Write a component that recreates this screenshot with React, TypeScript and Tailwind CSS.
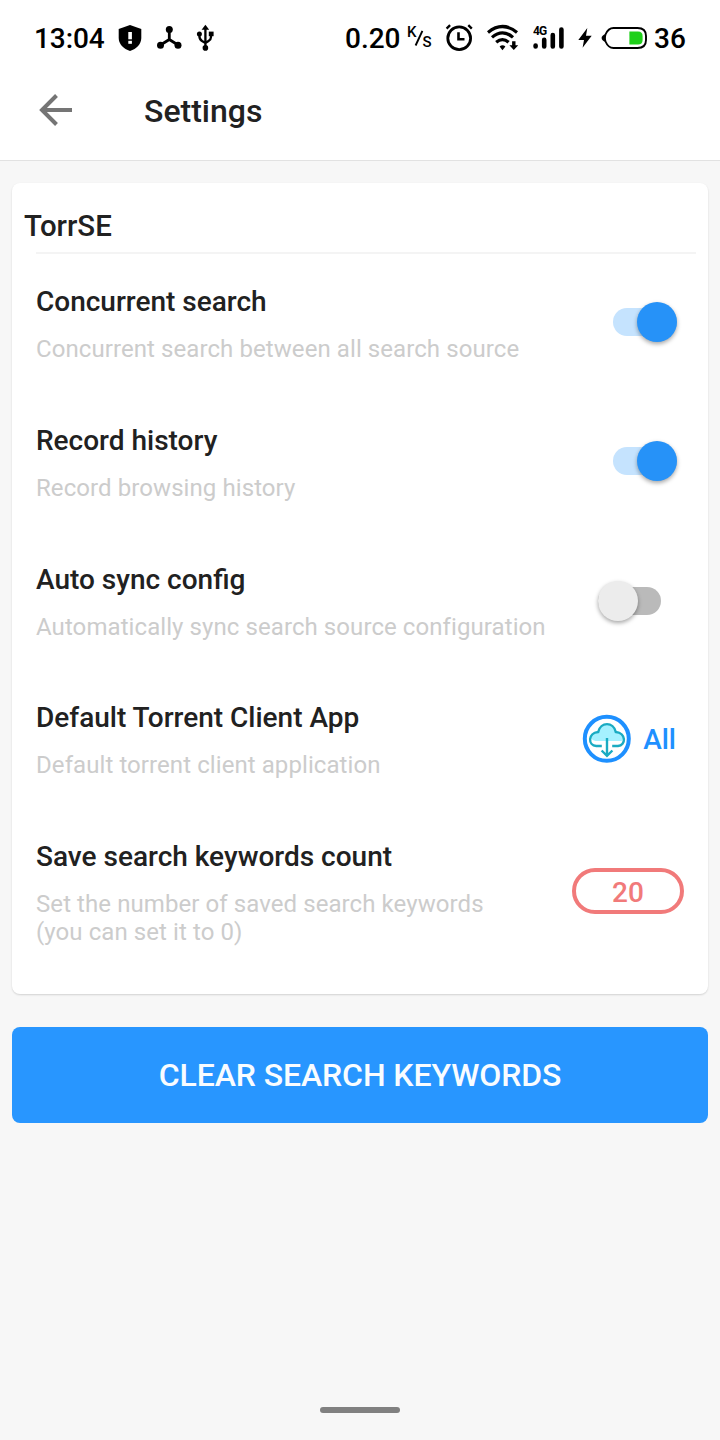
import type { ReactNode } from "react";

function StatusBar() {
  return (
    <div className="flex h-[76px] items-center bg-white pl-[34px] text-[28px] font-medium leading-none text-black">
      <span className="w-[84px] pt-[2px] tracking-[-0.1px]">13:04</span>
      <svg className="h-[28px] w-[24px]" viewBox="0 0 24 28">
        <path d="M12 1 L23.3 5 V14 C23.3 20 18.5 25 12 27 C5.5 25 .7 20 .7 14 V5 Z" fill="#000" />
        <rect x="10.3" y="8" width="3.6" height="7.3" fill="#fff" />
        <rect x="10.3" y="16.8" width="3.6" height="3" fill="#fff" />
      </svg>
      <svg className="ml-[14px] h-[26px] w-[26px]" viewBox="0 0 26 26">
        <path d="M13.3 5 V14.5 M13.3 14.5 L4.5 20 M13.3 14.5 L22 20" stroke="#000" strokeWidth="2.8" fill="none" />
        <circle cx="13.3" cy="4.6" r="3.5" />
        <circle cx="4.5" cy="20.2" r="3.5" />
        <circle cx="22" cy="20.2" r="3.5" />
      </svg>
      <svg className="ml-[14px] h-[28px] w-[18px]" viewBox="0 0 18 28">
        <path d="M9.4 5 V24 M3.4 9 V12 Q3.4 15.5 6 17 L9.4 19 M15 9 V13 Q15 15.5 12.5 17 L9.4 19" stroke="#000" strokeWidth="2.3" fill="none" />
        <path d="M9.4 0.8 L13.2 5.7 H5.6 Z" />
        <circle cx="3.4" cy="9.9" r="2.5" />
        <rect x="12.8" y="7.6" width="4.8" height="4.6" />
        <circle cx="9.4" cy="23.9" r="2.8" />
      </svg>
      <span className="ml-[131px] w-[62px] pt-[2px]">0.20</span>
      <span className="flex h-[26px] w-[26px] text-[15px]">
        <span>K</span>
        <svg className="-ml-[2px] mt-[5px] h-[17px] w-[10px]" viewBox="0 0 10 17">
          <path d="M8.4 .8 L1.6 15.5" stroke="#000" strokeWidth="1.9" />
        </svg>
        <span className="-ml-[2px] pt-[10px]">S</span>
      </span>
      <svg className="ml-[12px] h-[28px] w-[28px]" viewBox="0 0 28 28">
        <circle cx="14.2" cy="14.2" r="11.4" fill="none" stroke="#000" strokeWidth="2.8" />
        <path d="M13.5 8.3 V15.3 H19.5" fill="none" stroke="#000" strokeWidth="2.6" />
        <path d="M1.6 4.6 L5.1 1.2 M23.3 1.2 L26.8 4.6" stroke="#000" strokeWidth="2.4" />
      </svg>
      <svg className="ml-[14px] h-[28px] w-[32px]" viewBox="0 0 32 28">
        <g fill="none" stroke="#000" strokeWidth="3.2">
          <path d="M1 8.4 Q15.5 -3.4 30 8.4" />
          <path d="M5 13.4 Q15.5 4.4 26 13.4" />
          <path d="M9.2 18.3 Q15.5 12.8 21.6 18.3" />
        </g>
        <path d="M12.6 22.4 Q15.5 19.9 18.4 22.4 L15.5 26.2 Z" />
        <path d="M25.1 17.2 H28.5 V21.2 H31.2 L26.8 26 L22.4 21.2 H25.1 Z" />
      </svg>
      <svg className="ml-[14px] h-[26px] w-[33px]" viewBox="0 0 33 26">
        <g stroke="#000" strokeWidth="4.6" strokeLinecap="round">
          <path d="M2.6 20.6 V21.4 M11.2 14.8 V21.4 M19.8 10 V21.4 M28.4 4.6 V21.4" />
        </g>
        <text x="0" y="10.4" fontSize="12" fontWeight="700" letterSpacing="-1" className="font-['Roboto']">4G</text>
      </svg>
      <svg className="ml-[12px] h-[22px] w-[14px]" viewBox="0 0 14 22">
        <path d="M9.3 1 L.3 13 H6 L4.6 20.8 L13.7 8.8 H8 Z" />
      </svg>
      <svg className="ml-[9px] h-[24px] w-[48px]" viewBox="0 0 48 24">
        <path d="M12.5 2 H36.5 Q45 2 45 10 V14 Q45 22 36.5 22 H12.5 C8.5 22 6 19 4.5 15.5 Q3 12 4.5 8.5 C6 5 8.5 2 12.5 2 Z" fill="none" stroke="#000" strokeWidth="1.9" />
        <path d="M4.7 8 Q.6 9.5 .6 12 Q.6 14.5 4.7 16 Z" />
        <path d="M28.4 5.5 H37 Q41.6 5.5 41.6 10 V14 Q41.6 18.5 37 18.5 H28.4 Z" fill="#1fd01a" />
      </svg>
      <span className="ml-[5px] pt-[2px]">36</span>
    </div>
  );
}

function Header() {
  return (
    <header className="flex h-[85px] items-center border-b border-[#e2e2e2] bg-white pb-[15px] pl-[38px]">
      <svg className="-mt-px h-[34px] w-[36px]" viewBox="0 0 36 34">
        <path d="M34 17 H5 M18.5 2.5 L4 17 L18.5 31.5" fill="none" stroke="#757575" strokeWidth="4" />
      </svg>
      <h1 className="ml-[70px] text-[32px] font-medium leading-[38px] text-[#212121]">Settings</h1>
    </header>
  );
}

function Toggle({ on }: { on: boolean }) {
  return on ? (
    <div role="switch" aria-checked="true" className="mb-[2px] mr-[19px] flex h-[28px] w-[64px] items-center justify-end rounded-full bg-[#c5e3fe]">
      <div className="h-[40px] w-[40px] shrink-0 rounded-full bg-[#2692f8] shadow-[0_2px_4px_rgba(0,0,0,0.35)]" />
    </div>
  ) : (
    <div role="switch" aria-checked="false" className="mr-[35px] flex h-[28px] w-[63px] items-center rounded-full bg-[#bababa]">
      <div className="h-[40px] w-[40px] shrink-0 rounded-full bg-[#ececec] shadow-[0_2px_4px_rgba(0,0,0,0.35)]" />
    </div>
  );
}

function ClientPicker() {
  return (
    <div className="mr-[20px] flex items-center text-[28px] font-medium text-[#1e90ff]">
      <svg className="h-[50px] w-[50px]" viewBox="0 0 50 50">
        <circle cx="24.8" cy="24.8" r="22" fill="#fff" stroke="#1e90ff" strokeWidth="4" />
        <path d="M13.5 27 Q8.5 26 9 21.5 Q10 17.5 16 17.5 Q17.5 10 25 10 Q32.5 10 34 17.5 Q40 17.5 41.5 22 Q42 25 39.5 27 Z" fill="#a5f1ff" />
        <path d="M19.8 32 H14.2 C6 31.5 5.5 19 16.2 18 C18.5 7.5 31.5 7.5 33.8 18 C44.5 19 44 31.5 36 32 H30.2 M25 24 V41 M19.6 36.5 L25 41.8 L30.4 36.5" fill="none" stroke="#1aabc2" strokeWidth="2.4" />
      </svg>
      <span className="ml-[11px] pt-[2px]">All</span>
    </div>
  );
}

function Row({ title, description, children }: { title: string; description: ReactNode; children: ReactNode }) {
  return (
    <div className="flex h-[138.75px] justify-between pl-[24px] pt-[31px]">
      <div>
        <h3 className="text-[28px] font-medium leading-[33px] text-[#212121]">{title}</h3>
        <p className="mt-[17px] whitespace-nowrap text-[24px] leading-[28px] tracking-[0.08px] text-[#cccccc]">{description}</p>
      </div>
      <div className="flex h-[76px] items-center pr-[12px]">{children}</div>
    </div>
  );
}

export default function App() {
  return (
    <div className="flex h-[1440px] w-[720px] flex-col bg-[#f7f7f7] font-['Roboto',sans-serif]">
      <StatusBar />
      <Header />
      <main className="flex flex-1 flex-col px-[12px] pt-[22px]">
        <section className="h-[811px] rounded-[8px] bg-white shadow-[0_1px_2px_rgba(0,0,0,0.15)]">
          <h2 className="pl-[12px] pt-[25px] text-[29.4px] font-medium leading-[36px] text-[#212121]">TorrSE</h2>
          <div className="ml-[24px] mr-[12px] mt-[8px] h-[2px] bg-[#f4f4f4]" />
          <Row title="Concurrent search" description="Concurrent search between all search source">
            <Toggle on />
          </Row>
          <Row title="Record history" description="Record browsing history">
            <Toggle on />
          </Row>
          <Row title="Auto sync config" description="Automatically sync search source configuration">
            <Toggle on={false} />
          </Row>
          <Row title="Default Torrent Client App" description="Default torrent client application">
            <ClientPicker />
          </Row>
          <Row
            title="Save search keywords count"
            description={<>Set the number of saved search keywords<br />(you can set it to 0)</>}
          >
            <div className="mr-[12px] mt-[26px] flex h-[46px] w-[112px] items-center justify-center rounded-full border-4 border-[#f17a7a] pt-[3px] text-[28px] font-medium text-[#f17a7a]">
              20
            </div>
          </Row>
        </section>
        <button className="mt-[33px] h-[96px] rounded-[8px] bg-[#2896ff] text-[32px] font-medium tracking-[-0.1px] text-[#f9fcff]">
          CLEAR SEARCH KEYWORDS
        </button>
      </main>
      <div className="mb-[27px] h-[6px] w-[80px] self-center rounded-full bg-[#808080]" />
    </div>
  );
}
